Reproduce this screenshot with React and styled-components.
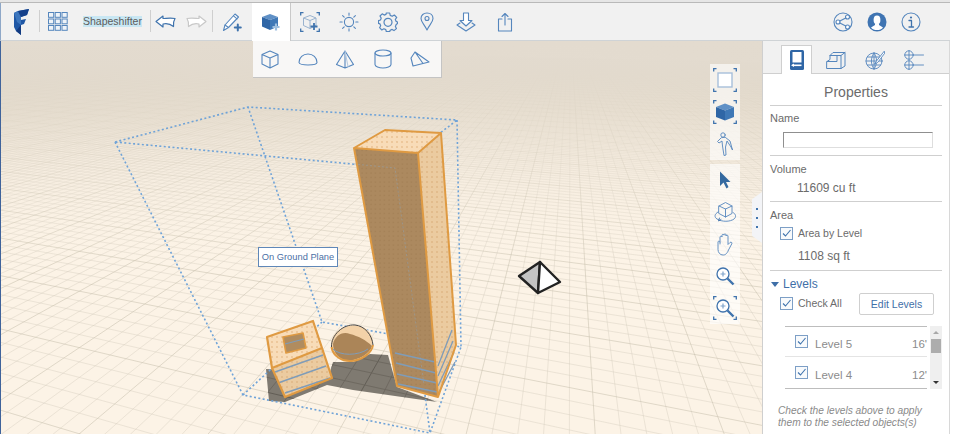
import React from "react"
import styled, { createGlobalStyle } from "styled-components"

const BLUE = "#5586bd"
const DARK = "#3f73ad"

const Global = createGlobalStyle`
    html, body { margin: 0; padding: 0; background: #fff; }
    body { font-family: "Liberation Sans", Arial, sans-serif; }
`

const Page = styled("div")`
    width: 953px;
    height: 434px;
    overflow: hidden;
    display: flex;
    flex-direction: column;
    box-sizing: border-box;
    background: #fff;
`

const TopEdge = styled("div")`
    height: 3px;
    width: 950px;
    box-sizing: border-box;
    background: #e6e6e6;
    border-bottom: 1px solid #b9b9b9;
`

const Toolbar = styled("div")`
    width: 950px;
    height: 38px;
    box-sizing: border-box;
    display: flex;
    align-items: stretch;
    background: #f1f1f1;
    border-left: 1px solid #8fa8c8;
    border-bottom: 1px solid #cfd3d6;
`

const ToolButton = styled("div")`
    width: ${p => p.$w || 39}px;
    flex: none;
    display: flex;
    align-items: center;
    justify-content: center;
    padding-left: ${p => p.$pad || 0}px;
    background: ${p => (p.$active ? "#fff" : "transparent")};
    margin-bottom: ${p => (p.$active ? "-1px" : "0")};
    border-right: ${p => (p.$active ? "1px solid #c9c9c9" : "0")};
    box-sizing: border-box;
    position: relative;
    z-index: 3;
`

const Separator = styled("div")`
    width: 1px;
    flex: none;
    margin: 7px 0 8px;
    background: #cfcfcf;
`

const ProjectName = styled("div")`
    margin: 0 8px 0 7px;
    align-self: center;
    font-size: 10.5px;
    line-height: 11px;
    color: #5c5c5c;
    background: #c9e7f3;
    white-space: nowrap;
`

const Spacer = styled("div")`
    flex: 1;
`

const Body = styled("div")`
    flex: 1;
    display: flex;
    min-height: 0;
    width: 950px;
`

const Stage = styled("div")`
    position: relative;
    flex: none;
    width: 761px;
    height: 393px;
    border-left: 1px solid #3f639b;
    overflow: hidden;
`

const Scene = styled("svg")`
    display: block;
    width: 761px;
    height: 393px;
    filter: blur(0.35px);
`

const Flyout = styled("div")`
    position: absolute;
    left: 252px;
    top: 0;
    height: 36px;
    display: flex;
    background: #f8f7f6;
    border-right: 1px solid #c4c4c4;
    border-bottom: 1px solid #c4c4c4;
`

const FlyoutItem = styled("div")`
    width: 37.5px;
    box-sizing: border-box;
    padding-right: 3px;
    display: flex;
    align-items: center;
    justify-content: center;
`

const Tooltip = styled("div")`
    position: absolute;
    left: 257px;
    top: 206px;
    width: 80px;
    height: 20px;
    box-sizing: border-box;
    border: 1px solid #5f87b8;
    background: #fff;
    color: #4a6fa5;
    font-size: 9.3px;
    line-height: 18px;
    text-align: center;
    white-space: nowrap;
`

const ViewTools = styled("div")`
    position: absolute;
    left: 709px;
    top: 23px;
    width: 30px;
    display: flex;
    flex-direction: column;
    gap: 4px;
`

const ViewGroup = styled("div")`
    display: flex;
    flex-direction: column;
    background: rgba(255, 255, 255, 0.62);
`

const ViewButton = styled("div")`
    height: ${p => p.$h || 32}px;
    display: flex;
    align-items: center;
    justify-content: center;
`

const Handle = styled("div")`
    position: absolute;
    right: 0;
    top: 151px;
    width: 10px;
    height: 51px;
    box-sizing: border-box;
    background: #f3f4f7;
    clip-path: polygon(100% 0, 100% 100%, 0 86%, 0 14%);
    display: flex;
    flex-direction: column;
    align-items: center;
    justify-content: center;
    gap: 7px;
`

const HandleDot = styled("span")`
    width: 2px;
    height: 2px;
    background: ${DARK};
`

const Panel = styled("div")`
    flex: none;
    width: 188px;
    box-sizing: border-box;
    border-left: 1px solid #cfcfcf;
    border-right: 1px solid #d8d8d8;
    color: #6b6b6b;
    background: #fff;
`

const Tabs = styled("div")`
    height: 33px;
    box-sizing: border-box;
    display: flex;
    align-items: flex-end;
    gap: 8px;
    padding-left: 18px;
    background: #f1f1f1;
    border-bottom: 1px solid #cfcfcf;
`

const Tab = styled("div")`
    width: 31px;
    height: 29px;
    box-sizing: border-box;
    margin-bottom: -1px;
    display: flex;
    align-items: center;
    justify-content: center;
    background: ${p => (p.$active ? "#fff" : "transparent")};
    border: 1px solid ${p => (p.$active ? "#cfcfcf" : "transparent")};
    border-bottom: 0;
`

const PanelBody = styled("div")`
    padding: 0 7px 0 7px;
`

const Title = styled("div")`
    height: 31px;
    line-height: 37px;
    text-align: center;
    font-size: 14px;
    color: #6b6b6b;
    border-bottom: 1px solid #cfcfcf;
`

const Section = styled("div")`
    height: ${p => p.$h}px;
    box-sizing: border-box;
    padding-top: ${p => p.$top || 6}px;
    border-bottom: ${p => (p.$plain ? "0" : "1px solid #cfcfcf")};
`

const Label = styled("div")`
    font-size: 11px;
    line-height: 13px;
    color: #6b6b6b;
`

const NameInput = styled("div")`
    width: 150px;
    height: 16px;
    box-sizing: border-box;
    margin: 7px 0 0 13px;
    background: #fff;
    border: 1px solid #dedede;
    border-top-color: #8f8f8f;
    border-left-color: #8f8f8f;
`

const Value = styled("div")`
    margin: ${p => p.$top || 4}px 0 0 ${p => p.$left || 27}px;
    font-size: 12px;
    line-height: 14px;
    color: #6b6b6b;
`

const CheckRow = styled("div")`
    display: flex;
    align-items: center;
    gap: 5px;
    margin: ${p => p.$top || 0}px 0 0 10px;
    font-size: 10.5px;
    line-height: 13px;
    color: #6b6b6b;
`

const Box = styled("span")`
    width: 13px;
    height: 13px;
    flex: none;
    box-sizing: border-box;
    display: flex;
    align-items: center;
    justify-content: center;
    border: 1px solid #7d9fc6;
    background: #f8fafc;
`

const LevelsHead = styled("div")`
    display: flex;
    align-items: center;
    gap: 4px;
    padding-left: 1px;
    font-size: 12px;
    line-height: 14px;
    color: #3f6fa8;
`

const Caret = styled("span")`
    width: 0;
    height: 0;
    border-left: 4px solid transparent;
    border-right: 4px solid transparent;
    border-top: 5px solid #3f6fa8;
`

const CheckAllRow = styled("div")`
    display: flex;
    align-items: center;
    justify-content: space-between;
    height: 23px;
    margin-top: 1px;
    padding-right: 8px;
`

const EditButton = styled("div")`
    width: 75px;
    height: 22px;
    box-sizing: border-box;
    border: 1px solid #cfcfcf;
    border-radius: 2px;
    color: #3f6fa8;
    background: #fff;
    font-size: 10.5px;
    line-height: 21px;
    text-align: center;
`

const ListArea = styled("div")`
    display: flex;
    gap: 3px;
    margin: 11px 0 0 15px;
`

const LevelList = styled("div")`
    width: 142px;
    box-sizing: border-box;
    border-top: 1px solid #bdbdbd;
    border-bottom: 1px solid #bdbdbd;
`

const LevelRow = styled("div")`
    height: ${p => p.$h}px;
    box-sizing: border-box;
    display: flex;
    align-items: center;
    padding-left: 10px;
    font-size: 11.5px;
    color: #8c8c8c;
    border-bottom: ${p => (p.$last ? "0" : "1px solid #e4e4e4")};
`

const LevelName = styled("span")`
    flex: 1;
    margin-left: 7px;
    padding-top: 5px;
`

const LevelHeight = styled("span")`
    padding-top: 5px;
`

const ScrollTrack = styled("div")`
    width: 12px;
    height: 63px;
    position: relative;
    background: #efefef;
`

const ScrollUp = styled("span")`
    position: absolute;
    left: 3px;
    top: 5px;
    border-left: 3px solid transparent;
    border-right: 3px solid transparent;
    border-bottom: 3px solid #a8a8a8;
`

const ScrollDown = styled("span")`
    position: absolute;
    left: 3px;
    bottom: 5px;
    border-left: 3px solid transparent;
    border-right: 3px solid transparent;
    border-top: 3px solid #333;
`

const ScrollThumb = styled("span")`
    position: absolute;
    left: 1px;
    top: 13px;
    width: 10px;
    height: 14px;
    background: #adadad;
`

const Note = styled("div")`
    margin: 16px 0 0 8px;
    font-size: 10.2px;
    line-height: 11.5px;
    font-style: italic;
    color: #8a8a8a;
    white-space: nowrap;
`

const Ico = ({ w = 22, h = 22, vb, children, sw = 1.1 }) => (
    <svg width={w} height={h} viewBox={vb || `0 0 ${w} ${h}`} fill="none" stroke={BLUE} strokeWidth={sw} strokeLinejoin="round" strokeLinecap="round">
        {children}
    </svg>
)

const Corners = ({ s = 24 }) => (
    <g stroke={DARK} strokeWidth="1.3">
        <path d={`M0.7 3.5V0.7H3.5M${s - 3.5} 0.7H${s - 0.7}V3.5M${s - 0.7} ${s - 3.5}V${s - 0.7}H${s - 3.5}M3.5 ${s - 0.7}H0.7V${s - 3.5}`} />
    </g>
)

const Logo = () => (
    <svg width="16" height="26" viewBox="0 0 16 26">
        <polygon points="0,4 4,2 15,0 13,6 7,8 7,11 12,10 10,15 7,16 7,26 2,22 0,18" fill="#1f57a5" />
        <polygon points="0,4 4,2 7,8 7,16 3,13" fill="#3d76bd" />
        <polygon points="4,2 15,0 13,6 7,8" fill="#14408a" />
        <polygon points="2,22 7,16 7,26" fill="#123a80" />
    </svg>
)

const GridIcon = () => (
    <svg width="20" height="20" viewBox="0 0 20 20" fill="#eef3f8" stroke={BLUE} strokeWidth="1">
        {[0.5, 7, 13.5].map(y => [0.5, 7.2, 14].map(x => <rect key={`${x}-${y}`} x={x} y={y} width="5.2" height="4.8" />))}
    </svg>
)

const UndoIcon = ({ muted }) => (
    <svg width="21" height="14" viewBox="0 0 21 14" fill="#fff" stroke={muted ? "#c8c8c8" : DARK} strokeWidth="1.2" strokeLinejoin="round">
        <path d={muted ? "M1 3.5C6 2.5 10 3.5 13 3.5V1L20 6.5L13 12V9C9 8 5 9.5 2.5 11.5C3 8.5 2.5 6 1 3.5Z" : "M20 3.5C15 2.5 11 3.5 8 3.5V1L1 6.5L8 12V9C12 8 16 9.5 18.5 11.5C18 8.5 18.5 6 20 3.5Z"} />
    </svg>
)

const PencilIcon = () => (
    <Ico w={20} h={20}>
        <path d="M1.5 18.5L3 13L13 2L16.5 5L6.5 15.5Z" fill="#fff" />
        <path d="M3 13L6.5 15.5M11.5 3.8L15 6.8" />
        <path d="M15.8 12.5V18.5M12.8 15.5H18.8" stroke={DARK} strokeWidth="2" />
    </Ico>
)

const SolidCube = ({ plus }) => (
    <svg width="20" height="19" viewBox="0 0 20 19">
        <polygon points="1,4 9,1 17,4 9,7" fill="#5f90c6" />
        <polygon points="1,4 9,7 9,17 1,13.5" fill="#2f66a6" />
        <polygon points="17,4 9,7 9,17 17,13.5" fill="#3f78b6" />
        {plus && <path d="M15 10.5V17.5M11.5 14H18.5" stroke="#9fc0e0" strokeWidth="2.2" />}
    </svg>
)

const SelectionIcon = () => (
    <svg width="20" height="20" viewBox="0 0 20 20" fill="none" stroke="#9ab3cf" strokeWidth="1">
        <Corners s={20} />
        <path d="M3.5 6L10 3.5L16 6V13.5L10 16.5L3.5 13.5ZM3.5 6L10 8.5L16 6M10 8.5V16.5" />
        <path d="M14 11V18M10.5 14.5H17.5" stroke={DARK} strokeWidth="1.8" />
    </svg>
)

const SunIcon = () => (
    <Ico w={20} h={20}>
        <circle cx="10" cy="10" r="4.6" />
        <path d="M10 1V3.2M10 16.8V19M1 10H3.2M16.8 10H19M3.6 3.6L5.2 5.2M14.8 14.8L16.4 16.4M16.4 3.6L14.8 5.2M5.2 14.8L3.6 16.4" />
    </Ico>
)

const GearIcon = () => (
    <Ico w={20} h={20} sw={1.2}>
        <path d="M8.3 1H11.7L12.2 3.4L14.2 4.3L16.3 3L18.7 5.4L17.3 7.5L18.2 9.4L19.5 10V11.5L18.2 12.5L17.4 14.4L18.4 16.6L16 18.6L14.1 17.4L12.2 18.2L11.7 19.5H8.3L7.8 17.6L5.9 16.8L3.8 18L1.6 15.7L2.7 13.7L1.9 11.8L0.5 11.4V8.6L2.5 8L3.2 6.1L2 4L4.2 1.8L6.2 3.1L8 2.4Z" />
        <circle cx="10" cy="10.3" r="4" />
    </Ico>
)

const PinIcon = () => (
    <Ico w={14} h={19}>
        <path d="M7 18C4.5 12.5 1 10 1 6.5C1 3.2 3.6 1 7 1C10.4 1 13 3.2 13 6.5C13 10 9.5 12.5 7 18Z" />
        <circle cx="7" cy="6.5" r="2" />
    </Ico>
)

const DownloadIcon = () => (
    <Ico w={20} h={20}>
        <path d="M7.5 1H12.5V8.5H16L10 14L4 8.5H7.5Z" fill="#fff" />
        <path d="M4 11L1 13L10 19L19 13L16 11" />
    </Ico>
)

const ExportIcon = () => (
    <Ico w={16} h={20}>
        <path d="M5 7H1.5V19H14.5V7H11" />
        <path d="M8 13V1.5M5 4.5L8 1.5L11 4.5" />
    </Ico>
)

const ShareIcon = () => (
    <Ico w={20} h={20}>
        <circle cx="10" cy="10" r="9" />
        <circle cx="5" cy="10" r="2" fill="#fff" />
        <circle cx="14.5" cy="5" r="2" fill="#fff" />
        <circle cx="14.5" cy="15" r="2" fill="#fff" />
        <path d="M6.8 9L12.8 6M6.8 11L12.8 14" />
    </Ico>
)

const UserIcon = () => (
    <svg width="20" height="20" viewBox="0 0 20 20">
        <circle cx="10" cy="10" r="9.5" fill="#3f74b2" />
        <ellipse cx="10" cy="8" rx="3.4" ry="4.4" fill="#fff" />
        <path d="M8 11.5V13L4 15.5C5.5 17.5 7.5 18 10 18C12.5 18 14.5 17.5 16 15.5L12 13V11.5Z" fill="#fff" />
    </svg>
)

const InfoIcon = () => (
    <Ico w={20} h={20}>
        <circle cx="10" cy="10" r="9" />
        <circle cx="10" cy="5.5" r="1.1" fill={DARK} stroke="none" />
        <path d="M8 8.5H10.5V14.5M8 15H12.5" stroke={DARK} strokeWidth="1.3" />
    </Ico>
)

const CubeOutline = () => (
    <Ico w={18} h={19}>
        <path d="M9 1L17 4.5V14L9 18L1 14V4.5ZM1 4.5L9 8L17 4.5M9 8V18" />
    </Ico>
)

const DomeOutline = () => (
    <Ico w={20} h={13}>
        <path d="M1 9.5C1 4.5 5 1 10 1C15 1 19 4.5 19 9.5C19 11 15 12 10 12C5 12 1 11 1 9.5Z" />
    </Ico>
)

const PyramidOutline = () => (
    <Ico w={20} h={19}>
        <path d="M10 1L1.5 14.5L10 18L18.5 14.5ZM10 1V18" />
        <path d="M10 1L13 16.5" stroke="#b8cbe0" />
    </Ico>
)

const CylinderOutline = () => (
    <Ico w={18} h={20}>
        <ellipse cx="9" cy="4" rx="8" ry="3" />
        <path d="M1 4V15.5C1 17.5 5 19 9 19C13 19 17 17.5 17 15.5V4" />
    </Ico>
)

const WedgeOutline = () => (
    <Ico w={20} h={16}>
        <path d="M5 1L19 11L3 15L1 7ZM5 1L13 12.5" />
    </Ico>
)

const MassTab = () => (
    <svg width="14" height="20" viewBox="0 0 14 20">
        <rect width="14" height="20" rx="1.5" fill="#2f66a6" />
        <rect x="2.5" y="2" width="9" height="10.5" fill="#fff" />
        <rect x="2.5" y="14.5" width="9" height="1.6" fill="#fff" />
        <path d="M1 15.3L4 13.5V17Z" fill="#fff" />
    </svg>
)

const WallTab = () => (
    <Ico w={20} h={20} sw={1}>
        <path d="M1 18.5H15L19 16V2.5H7L4 5.5V9.5L1 11.5Z" />
        <path d="M4 5.5H15V18.5M15 5.5L19 2.5M1 11.5H11V5.5" />
    </Ico>
)

const GlobeTab = () => (
    <Ico w={20} h={20} sw={0.9}>
        <circle cx="9" cy="11" r="8" />
        <path d="M1 11H17M2.5 7H15.5M2.5 15H15.5M9 3C5.5 8 5.5 14 9 19M9 3C12.5 8 12.5 14 9 19M9 3V19" />
        <path d="M19 1.5L11.5 11L9.5 14L12.8 12.3L19.5 3.5Z" fill="#fff" stroke={BLUE} />
    </Ico>
)

const LevelsTab = () => (
    <Ico w={20} h={20} sw={0.9}>
        <circle cx="5" cy="5" r="4.2" />
        <circle cx="5" cy="15" r="4.2" />
        <path d="M5 0V20M0.5 5H19.5M0.5 15H19.5" />
    </Ico>
)

const FrameIcon = () => (
    <svg width="24" height="24" viewBox="0 0 24 24" fill="none">
        <Corners />
        <rect x="5" y="5" width="14" height="14" fill="#fff" stroke="#a7bfdb" strokeWidth="1.4" />
    </svg>
)

const FrameCube = () => (
    <svg width="24" height="24" viewBox="0 0 24 24" fill="none">
        <Corners />
        <polygon points="3,7 12,3.5 21,7 12,10.5" fill="#5f90c6" />
        <polygon points="3,7 12,10.5 12,20.5 3,17" fill="#2f66a6" />
        <polygon points="21,7 12,10.5 12,20.5 21,17" fill="#3f78b6" />
    </svg>
)

const WalkIcon = () => (
    <Ico w={18} h={24} sw={0.9}>
        <circle cx="7" cy="3" r="2.2" />
        <path d="M5 6L1.5 9.5L3 11L6 9L6.5 14L8 23.5L10 23L9.5 15L11 9L15 15L16.5 18L14 9L9.5 5.5Z" />
    </Ico>
)

const CursorIcon = () => (
    <svg width="12" height="18" viewBox="0 0 12 18">
        <path d="M1 0.5V15L4.5 11.5L7.5 17.5L9.5 16L7 11H11.5Z" fill="#34699f" />
    </svg>
)

const OrbitIcon = () => (
    <Ico w={24} h={24} sw={0.9}>
        <path d="M6 6L12.5 2.5L19 6V13.5L12.5 17L6 13.5ZM6 6L12.5 9L19 6M12.5 9V17" />
        <path d="M5 12C1.5 14 1 17 4 19C9 22 17 22 21 19C23.5 17 23 14 20 12.5" />
        <path d="M8 19.5L5.5 21L6.5 18" stroke={DARK} />
    </Ico>
)

const HandIcon = () => (
    <Ico w={16} h={23} sw={0.9}>
        <path d="M3 11V4C3 2.8 5 2.8 5 4V2.2C5 1 7 1 7 2.2V1.8C7 0.6 9 0.6 9 1.8V3C9 1.8 11 1.8 11 3V11.5L13 9.5C14.2 8.5 15.6 9.8 14.7 11L11.5 17C10 21 8 22 6 22C3 22 1 19.5 1 16.5V9C1 7.8 3 7.8 3 9" />
    </Ico>
)

const ZoomIcon = ({ framed }) => (
    <svg width="24" height="24" viewBox="0 0 24 24" fill="none" stroke={DARK}>
        {framed && <Corners />}
        <circle cx="10" cy="10" r="6" strokeWidth="1.3" fill="#fff" />
        <path d="M10 7.5V12.5M7.5 10H12.5" stroke="#7fa3cb" strokeWidth="1.2" />
        <path d="M14.5 14.5L20.5 20.5" strokeWidth="2.4" />
    </svg>
)

const Check = () => (
    <svg width="11" height="11" viewBox="0 0 11 11" fill="none" stroke={DARK} strokeWidth="1.1">
        <path d="M2 5.5L4.5 8L9.5 2" />
    </svg>
)

const CheckBox = () => <Box><Check /></Box>

// ground plane homography: the two grid directions run to these vanishing points
const VA = [-1300, 20]
const VB = [570, 20]
const ORIGIN = [300, 500]
const ALPHA = 0.016
const BETA = 0.045

const project = (u, v) => {
    const w = 1 + ALPHA * u + BETA * v
    return [
        (ORIGIN[0] + ALPHA * u * VA[0] + BETA * v * VB[0]) / w,
        (ORIGIN[1] + ALPHA * u * VA[1] + BETA * v * VB[1]) / w,
    ]
}

const gridLines = () => {
    const minor = []
    const major = []
    const add = (a, b, idx) => {
        const d = `M${a[0].toFixed(1)} ${a[1].toFixed(1)}L${b[0].toFixed(1)} ${b[1].toFixed(1)}`
        if (idx % 5 === 0) major.push(d)
        else minor.push(d)
    }
    for (let v = 0; v < 260; v++) {
        const u = (0.12 - 1 - BETA * v) / ALPHA
        add(project(u, v), VA, v)
    }
    for (let u = -420; u < 330; u++) {
        const v = (0.12 - 1 - ALPHA * u) / BETA
        add(project(u, v), VB, u)
    }
    return { minor: minor.join(""), major: major.join("") }
}

const GRID = gridLines()

const DASHED = "M115 142L248 107L457 120L395 168ZM115 142L243 395L430 433L461 347L322 322L248 107M243 395L322 322M457 120L461 347M395 168L430 433"
const SHADOW = "266,369 269,401 285,402 327,385 353,390 437,402 397,387 388,355 370,354 353,362 333,362 330,372"

const GroundGrid = () => (
    <g>
        <rect x="0" y="41" width="762" height="393" fill="#fcf3e6" />
        <path d={GRID.minor} stroke="#d3cbbc" strokeWidth="0.8" opacity="0.5" fill="none" />
        <path d={GRID.major} stroke="#c8bfae" strokeWidth="0.9" opacity="0.6" fill="none" />
        <rect x="0" y="41" width="762" height="393" fill="url(#fog)" />
    </g>
)

const Tower = () => (
    <g stroke="#df9a42" strokeWidth="2" strokeLinejoin="round">
        <polygon points="354,148 418,153 438,397 397,386" fill="url(#dotsDark)" stroke="none" />
        <polygon points="418,153 441,133 456,345 438,397" fill="url(#dotsLight)" stroke="none" />
        <polygon points="354,148 385,130 441,133 418,153" fill="url(#dotsTop)" stroke="none" />
        <g stroke="#7f9cb8" strokeWidth="1.3">
            <path d="M395 353L435 362M396 363L436 373M397 374L437 383M398 384L437 392" />
            <path d="M438 366L452 330M438 376L453 341M438 386L454 352M438 394L455 362" />
        </g>
        <path d="M354 148L397 386L438 397L456 345L441 133L385 130ZM354 148L418 153L441 133M418 153L438 397" fill="none" />
    </g>
)

const SmallCube = () => (
    <g stroke="#df9a42" strokeWidth="2.2" strokeLinejoin="round">
        <polygon points="272,368 322,348 332,378 285,397" fill="url(#dotsLight)" stroke="none" />
        <polygon points="267,337 313,321 322,348 272,368" fill="url(#dotsTop)" stroke="none" />
        <polygon points="283,337 303,333 306,348 286,353" fill="#b08c5f" stroke="#df9a42" strokeWidth="1.6" />
        <path d="M285 344L304 339" stroke="#7f9cb8" strokeWidth="1.2" />
        <path d="M275 372L323 355M278 383L326 366M285 393L330 378" stroke="#7f9cb8" strokeWidth="1.4" />
        <path d="M267 337L313 321L322 348L332 378L285 397L272 368ZM272 368L322 348" fill="none" />
    </g>
)

const Dome = () => (
    <g>
        <ellipse cx="352" cy="343" rx="21" ry="17.5" transform="rotate(-12 352 343)" fill="#f3d2a8" />
        <path d="M333 344C335 336 342 331 350 334C358 336 366 340 372 346C370 354 358 360 348 361C339 360 333 352 333 344Z" fill="#ab8558" />
        <path d="M331.5 347C333 356 342 362 352 361C362 360 372 353 373 345" fill="none" stroke="#df9a42" strokeWidth="2" />
        <path d="M331.5 347C331 335 343 324 355 325C365 326 372 335 373 345" fill="none" stroke="#4a4a4a" strokeWidth="1" />
        <path d="M333 349C340 356 358 356 368 349" fill="none" stroke="#7f9cb8" strokeWidth="1" />
    </g>
)

const Gizmo = () => (
    <g stroke="#222" strokeWidth="2.4" strokeLinejoin="round">
        <polygon points="519,276 540,262 538,293" fill="#c3c3c3" />
        <polygon points="540,262 560,282 538,293" fill="#fff" />
    </g>
)

const Viewport = () => (
    <Scene viewBox="1 41 761 393">
        <defs>
            <linearGradient id="fog" x1="0" y1="41" x2="0" y2="270" gradientUnits="userSpaceOnUse">
                <stop offset="0" stopColor="#e3dbcf" stopOpacity="1" />
                <stop offset="0.1" stopColor="#e3dbcf" stopOpacity="0.97" />
                <stop offset="0.3" stopColor="#e6ddcf" stopOpacity="0.72" />
                <stop offset="0.6" stopColor="#efe6d9" stopOpacity="0.45" />
                <stop offset="1" stopColor="#fcf3e6" stopOpacity="0" />
            </linearGradient>
            <pattern id="dotsDark" width="4.5" height="4.5" patternUnits="userSpaceOnUse">
                <rect width="4.5" height="4.5" fill="#ac895f" />
                <circle cx="2" cy="2" r="0.7" fill="#a07d52" />
            </pattern>
            <pattern id="dotsLight" width="5" height="5" patternUnits="userSpaceOnUse">
                <rect width="5" height="5" fill="#ebcba0" />
                <circle cx="2" cy="2" r="0.7" fill="#d3a36c" />
            </pattern>
            <pattern id="dotsTop" width="5" height="5" patternUnits="userSpaceOnUse">
                <rect width="5" height="5" fill="#f8dcb8" />
                <circle cx="2" cy="2" r="0.7" fill="#dca56a" />
            </pattern>
            <clipPath id="shadowClip">
                <polygon points={SHADOW} />
            </clipPath>
        </defs>
        <GroundGrid />
        <polygon points={SHADOW} fill="#7f7a71" />
        <g clipPath="url(#shadowClip)">
            <path d={GRID.major} stroke="#5f5a52" strokeWidth="0.9" fill="none" />
            <path d={GRID.minor} stroke="#6a655c" strokeWidth="0.8" fill="none" />
        </g>
        <path d={DASHED} fill="none" stroke="#6fa3d8" strokeWidth="1.6" strokeDasharray="2 2.4" />
        <Tower />
        <path d="M354 164L395 168L424 385" fill="none" stroke="#8ea2b4" strokeWidth="1" strokeDasharray="2 2" opacity="0.5" />
        <Dome />
        <SmallCube />
        <Gizmo />
    </Scene>
)

const App = () => (
    <Page>
        <Global />
        <TopEdge />
        <Toolbar>
            <ToolButton $w={38} $pad={3}><Logo /></ToolButton>
            <Separator />
            <ToolButton $w={36}><GridIcon /></ToolButton>
            <ProjectName>Shapeshifter</ProjectName>
            <Separator />
            <ToolButton $w={30}><UndoIcon /></ToolButton>
            <ToolButton $w={31}><UndoIcon muted /></ToolButton>
            <Separator />
            <ToolButton><PencilIcon /></ToolButton>
            <ToolButton $active><SolidCube plus /></ToolButton>
            <ToolButton><SelectionIcon /></ToolButton>
            <ToolButton><SunIcon /></ToolButton>
            <ToolButton><GearIcon /></ToolButton>
            <ToolButton><PinIcon /></ToolButton>
            <ToolButton><DownloadIcon /></ToolButton>
            <ToolButton><ExportIcon /></ToolButton>
            <Spacer />
            <ToolButton $w={34}><ShareIcon /></ToolButton>
            <ToolButton $w={34}><UserIcon /></ToolButton>
            <ToolButton $w={34}><InfoIcon /></ToolButton>
            <ToolButton $w={22} />
        </Toolbar>
        <Body>
            <Stage>
                <Viewport />
                <Flyout>
                    <FlyoutItem><CubeOutline /></FlyoutItem>
                    <FlyoutItem><DomeOutline /></FlyoutItem>
                    <FlyoutItem><PyramidOutline /></FlyoutItem>
                    <FlyoutItem><CylinderOutline /></FlyoutItem>
                    <FlyoutItem><WedgeOutline /></FlyoutItem>
                </Flyout>
                <Tooltip>On Ground Plane</Tooltip>
                <ViewTools>
                    <ViewGroup>
                        <ViewButton><FrameIcon /></ViewButton>
                        <ViewButton><FrameCube /></ViewButton>
                        <ViewButton><WalkIcon /></ViewButton>
                    </ViewGroup>
                    <ViewGroup>
                        <ViewButton><CursorIcon /></ViewButton>
                        <ViewButton><OrbitIcon /></ViewButton>
                        <ViewButton><HandIcon /></ViewButton>
                        <ViewButton><ZoomIcon /></ViewButton>
                        <ViewButton><ZoomIcon framed /></ViewButton>
                    </ViewGroup>
                </ViewTools>
                <Handle>
                    <HandleDot />
                    <HandleDot />
                    <HandleDot />
                </Handle>
            </Stage>
            <Panel>
                <Tabs>
                    <Tab $active><MassTab /></Tab>
                    <Tab><WallTab /></Tab>
                    <Tab><GlobeTab /></Tab>
                    <Tab><LevelsTab /></Tab>
                </Tabs>
                <PanelBody>
                    <Title>Properties</Title>
                    <Section $h={50}>
                        <Label>Name</Label>
                        <NameInput />
                    </Section>
                    <Section $h={46} $top={7}>
                        <Label>Volume</Label>
                        <Value $top={5}>11609 cu ft</Value>
                    </Section>
                    <Section $h={69} $top={7}>
                        <Label>Area</Label>
                        <CheckRow $top={5}><CheckBox />Area by Level</CheckRow>
                        <Value $top={9} $left={28}>1108 sq ft</Value>
                    </Section>
                    <Section $plain $h={160} $top={6}>
                        <LevelsHead><Caret />Levels</LevelsHead>
                        <CheckAllRow>
                            <CheckRow><CheckBox />Check All</CheckRow>
                            <EditButton>Edit Levels</EditButton>
                        </CheckAllRow>
                        <ListArea>
                            <LevelList>
                                <LevelRow $h={30}><CheckBox /><LevelName>Level 5</LevelName><LevelHeight>16'</LevelHeight></LevelRow>
                                <LevelRow $h={30} $last><CheckBox /><LevelName>Level 4</LevelName><LevelHeight>12'</LevelHeight></LevelRow>
                            </LevelList>
                            <ScrollTrack>
                                <ScrollUp />
                                <ScrollThumb />
                                <ScrollDown />
                            </ScrollTrack>
                        </ListArea>
                        <Note>Check the levels above to apply<br />them to the selected objects(s)</Note>
                    </Section>
                </PanelBody>
            </Panel>
        </Body>
    </Page>
)

export default App
